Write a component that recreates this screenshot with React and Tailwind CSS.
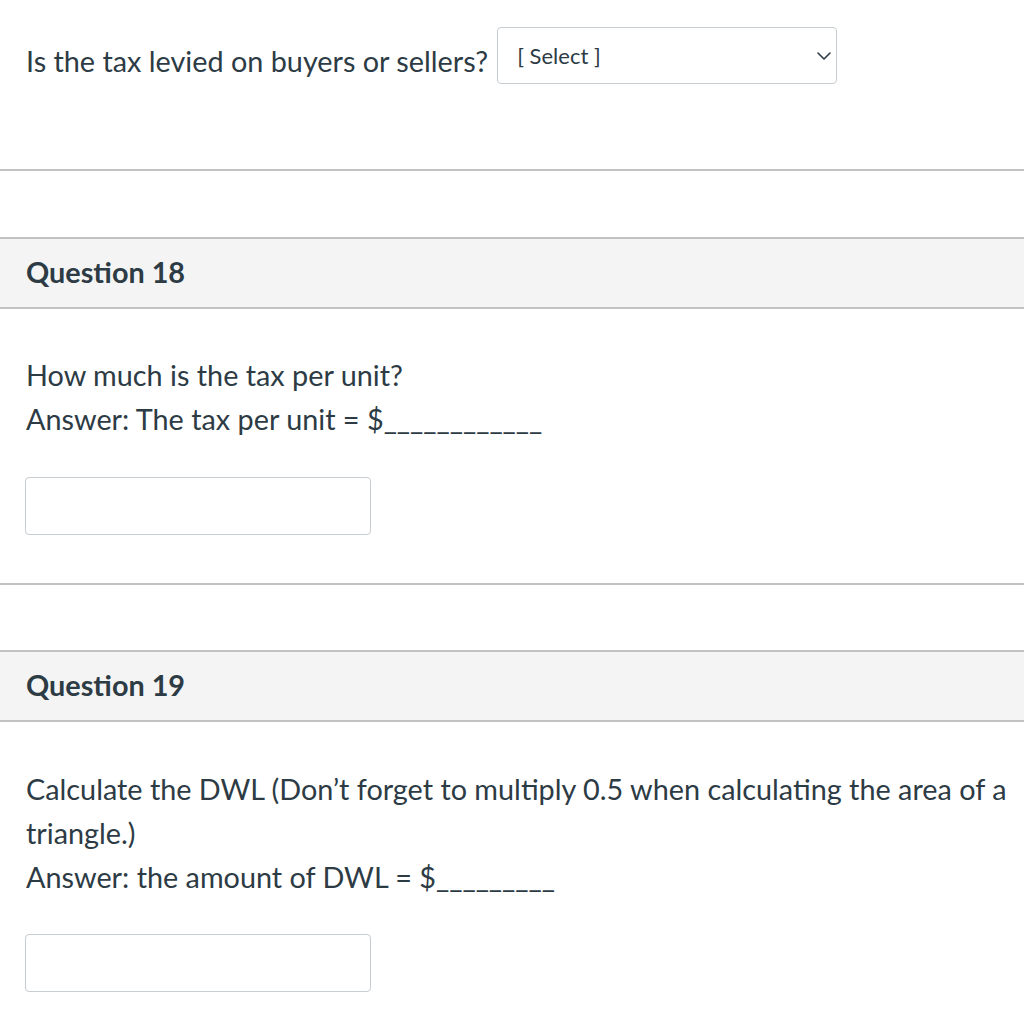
const font = { fontFamily: 'Lato, "Noto Sans", sans-serif' };

function Divider({ className = '' }) {
  return <div className={`h-[2px] w-full bg-[#c2c2c2] ${className}`} />;
}

function QuestionHeader({ number, className = '' }) {
  return (
    <div className={`h-[72px] border-y-2 border-[#c2c2c2] bg-[#f4f4f4] flex items-center px-[26px] ${className}`}>
      <h2 className="text-[28.8px] font-bold text-[#2d3b45]">Question {number}</h2>
    </div>
  );
}

function AnswerBox({ className = '' }) {
  return (
    <input
      type="text"
      className={`block ml-[25px] w-[346px] h-[58px] rounded-[4px] border border-[#c7cdd1] bg-white px-3 text-[28px] text-[#2d3b45] outline-none ${className}`}
    />
  );
}

export default function App() {
  return (
    <div className="w-[1024px] min-h-[1013px] bg-white text-[#2d3b45]" style={font}>
      {/* Tail of question 17 */}
      <div className="flex items-start h-[84px] pt-[27px] pl-[26px] gap-[9px]">
        <span className="text-[28.8px] leading-[57px] pt-[6px] whitespace-nowrap">Is the tax levied on buyers or sellers?</span>
        <div className="w-[340px] h-[57px] shrink-0 rounded-[4px] border border-[#c7cdd1] flex items-center justify-between pl-[19px] pr-[5px]">
          <span className="text-[22px]">[ Select ]</span>
          <svg width="14" height="8" viewBox="0 0 14 8" fill="none" className="text-[#2d3b45]">
            <path d="M1 1l6 6 6-6" stroke="currentColor" strokeWidth="1.6" strokeLinecap="round" strokeLinejoin="round" />
          </svg>
        </div>
      </div>

      <Divider className="mt-[85px]" />

      <QuestionHeader number={18} className="mt-[66px]" />
      <div className="mt-[44px] px-[26px] text-[28.8px] leading-[44px]">
        <p>How much is the tax per unit?</p>
        <p>Answer: The tax per unit = $____________</p>
      </div>
      <AnswerBox className="mt-[36px]" />

      <Divider className="mt-[48px]" />

      <QuestionHeader number={19} className="mt-[65px]" />
      <div className="mt-[45px] pl-[26px] pr-[4px] text-[28.8px] leading-[44px]">
        <p>Calculate the DWL (Don’t forget to multiply 0.5 when calculating the area of a triangle.)</p>
        <p>Answer: the amount of DWL = $_________</p>
      </div>
      <AnswerBox className="mt-[35px]" />
    </div>
  );
}
